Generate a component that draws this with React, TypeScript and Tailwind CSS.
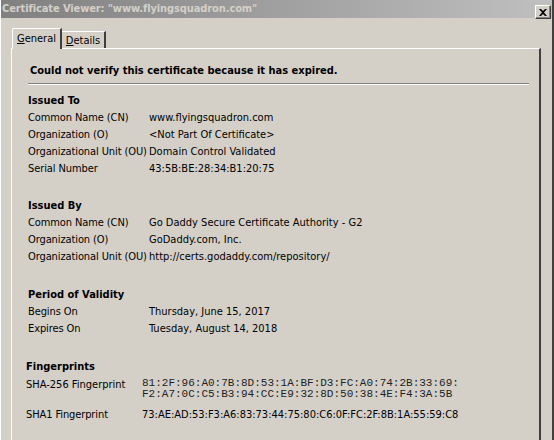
const font = { fontFamily: '"DejaVu Sans Condensed", "Liberation Sans", Arial, sans-serif' }

function Row({ label, value, w = 'w-[121px]' }: { label: string; value: string; w?: string }) {
  return (
    <div className="flex h-[17px] items-center whitespace-nowrap">
      <span className={`${w} shrink-0 tracking-[-0.1px]`}>{label}</span>
      <span>{value}</span>
    </div>
  )
}

function Section({ title, children, className = '' }: { title: string; children: React.ReactNode; className?: string }) {
  return (
    <div className={className}>
      <div className="flex h-[17px] items-center font-bold">{title}</div>
      {children}
    </div>
  )
}

export default function App() {
  return (
    <div
      className="w-[554px] h-[440px] overflow-hidden bg-[#d4d0c8] text-[11px] text-black border-l border-l-white border-r-2 border-r-[#404040] flex flex-col"
      style={font}
    >
      {/* title bar */}
      <div className="h-[18px] shrink-0 flex items-center justify-between pl-[1px] pr-[1px] bg-gradient-to-r from-[#808080] to-[#c0c0c0]">
        <span className="font-bold text-[#d4d0c8] tracking-[-0.1px]">Certificate Viewer: "www.flyingsquadron.com"</span>
        <button className="w-[16px] h-[14px] mt-[6px] bg-[#d4d0c8] border-t border-l border-t-white border-l-white border-b border-r border-b-[#404040] border-r-[#404040] flex items-center justify-center shadow-[inset_-1px_-1px_0_#808080]">
          <svg width="8" height="7" viewBox="0 0 8 7">
            <path d="M0 0h2l2 2 2-2h2L5 3.5 8 7H6L4 5 2 7H0l3-3.5z" fill="#000" />
          </svg>
        </button>
      </div>

      <div className="pl-[10px] pr-[11px] pt-[10px] flex-1 flex flex-col">
        {/* tabs */}
        <div className="flex items-end pl-[1px]">
          <div className="relative z-10 -mb-px h-[21px] w-[50px] bg-[#d4d0c8] border-t border-l border-white border-r-2 border-r-[#404040] rounded-tl-[2px] flex items-start justify-center pt-[2px]">
            <span><span className="underline">G</span>eneral</span>
          </div>
          <div className="h-[17px] w-[44px] bg-[#d4d0c8] border-t border-white border-r-2 border-r-[#404040] flex items-start justify-center pt-[1px]">
            <span><span className="underline">D</span>etails</span>
          </div>
        </div>

        {/* panel */}
        <div className="flex-1 border-t border-l border-white border-r-2 border-r-[#404040] pl-[16px] pt-[14px] pr-[10px]">
          <div className="flex h-[17px] items-center pl-[2px] font-bold">
            Could not verify this certificate because it has expired.
          </div>
          <div className="mt-[3px] h-[2px] border-t border-t-[#808080] border-b border-b-white" />

          <Section title="Issued To" className="mt-[8px]">
            <Row label="Common Name (CN)" value="www.flyingsquadron.com" />
            <Row label="Organization (O)" value="<Not Part Of Certificate>" />
            <Row label="Organizational Unit (OU)" value="Domain Control Validated" />
            <Row label="Serial Number" value="43:5B:BE:28:34:B1:20:75" />
          </Section>

          <Section title="Issued By" className="mt-[20px]">
            <Row label="Common Name (CN)" value="Go Daddy Secure Certificate Authority - G2" />
            <Row label="Organization (O)" value="GoDaddy.com, Inc." />
            <Row label="Organizational Unit (OU)" value="http://certs.godaddy.com/repository/" />
          </Section>

          <Section title="Period of Validity" className="mt-[21px]">
            <Row label="Begins On" value="Thursday, June 15, 2017" />
            <Row label="Expires On" value="Tuesday, August 14, 2018" />
          </Section>

          <Section title="Fingerprints" className="mt-[21px] -ml-[2px]">
            <div className="flex pt-[2px]">
              <span className="w-[116px] shrink-0 leading-[11px] pt-[1px]">SHA-256 Fingerprint</span>
              <div
                className="text-[11px] leading-[11px] text-[#222]"
                style={{ fontFamily: '"Liberation Mono", "Courier New", monospace' }}
              >
                <div>81:2F:96:A0:7B:8D:53:1A:BF:D3:FC:A0:74:2B:33:69:</div>
                <div>F2:A7:0C:C5:B3:94:CC:E9:32:8D:50:38:4E:F4:3A:5B</div>
              </div>
            </div>
            <div className="mt-[7px]">
              <Row label="SHA1 Fingerprint" value="73:AE:AD:53:F3:A6:83:73:44:75:80:C6:0F:FC:2F:8B:1A:55:59:C8" w="w-[116px]" />
            </div>
          </Section>
        </div>
      </div>
    </div>
  )
}
